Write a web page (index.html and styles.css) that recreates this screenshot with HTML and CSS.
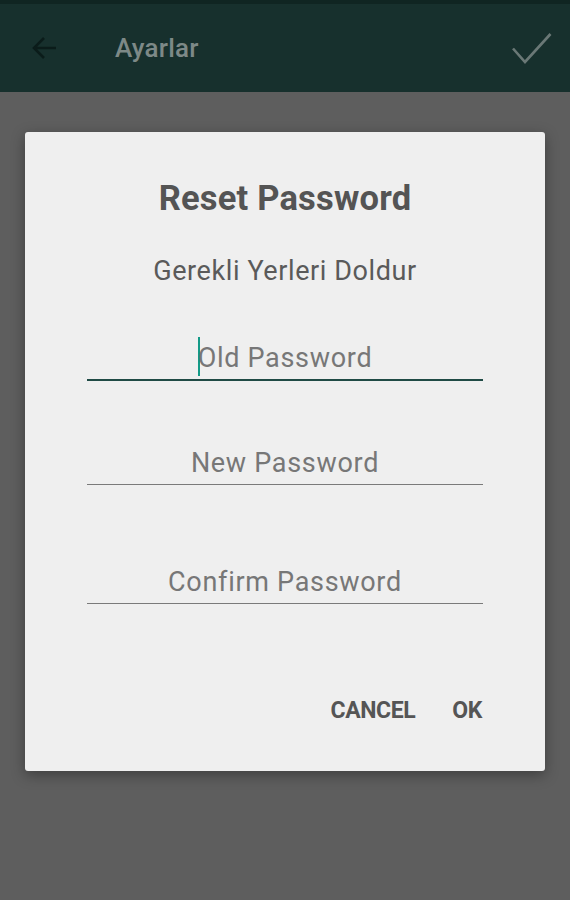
FILE: index.html
```html
<!DOCTYPE html>
<html>
<head>
<meta charset="utf-8">
<link rel="stylesheet" href="styles.css">
</head>
<body>
<div class="screen">
  <header class="appbar">
    <div class="statusbar"></div>
    <div class="toolbar">
      <svg class="icon-back" width="30" height="30" viewBox="0 0 30 30">
        <path d="M26 15H5M14 5L4 15l10 10" fill="none" stroke="#0b1c1a" stroke-width="2.6"/>
      </svg>
      <span class="title">Ayarlar</span>
      <svg class="icon-check" width="40" height="32" viewBox="0 0 40 32">
        <path d="M1 15.5l12 13.5L38.5 1" fill="none" stroke="#6a7876" stroke-width="2.6"/>
      </svg>
    </div>
  </header>
  <main class="overlay">
    <section class="dialog">
      <h1 class="dialog-title">Reset Password</h1>
      <p class="dialog-sub">Gerekli Yerleri Doldur</p>
      <div class="field field-active">
        <span class="cursor"></span><span class="ph">Old Password</span>
      </div>
      <div class="field field-2"><span class="ph">New Password</span></div>
      <div class="field field-3"><span class="ph">Confirm Password</span></div>
      <div class="actions">
        <span class="btn">CANCEL</span>
        <span class="btn">OK</span>
      </div>
    </section>
  </main>
</div>
</body>
</html>
```
FILE: styles.css
```css
* { box-sizing: border-box; margin: 0; padding: 0; }
html, body { width: 570px; height: 900px; overflow: hidden; }
body { font-family: Roboto, "Noto Sans", sans-serif; background: #5e5e5e; }
.screen { display: flex; flex-direction: column; height: 900px; }
.appbar { background: #17302d; height: 92px; display: flex; flex-direction: column; }
.statusbar { height: 4px; background: #102522; }
.toolbar { flex: 1; display: flex; align-items: center; padding: 0 18px 0 30px; }
.title { margin-left: 55px; font-size: 26px; font-weight: 500; color: #7d8987; flex: 1; letter-spacing: 0.2px; }
.icon-check { margin-top: 2px; }
.overlay { flex: 1; background: #5e5e5e; padding: 40px 25px 0; }
.dialog { background: #efefef; height: 639px; border-radius: 3px; box-shadow: 0 4px 14px rgba(0,0,0,0.35); display: flex; flex-direction: column; align-items: center; padding: 46px 62px 0; }
.dialog-title { font-size: 34.5px; font-weight: 700; color: #545454; line-height: 40px; letter-spacing: 0.2px; }
.dialog-sub { margin-top: 37px; font-size: 27px; color: #5a5a5a; line-height: 32px; letter-spacing: 0.6px; }
.field { align-self: stretch; border-bottom: 1px solid #7a7a7a; display: flex; justify-content: center; align-items: center; height: 50px; padding-top: 6px; font-size: 27px; color: #777; letter-spacing: 0.7px; }
.field-active { margin-top: 44px; border-bottom: 2px solid #1f4a45; }
.field-2 { margin-top: 54px; }
.field-3 { margin-top: 69px; }
.ph { line-height: 32px; }
.cursor { width: 2px; height: 39px; background: #139a87; margin-right: -2px; margin-top: -4px; }
.actions { align-self: stretch; margin-top: 94px; display: flex; justify-content: flex-end; gap: 37px; margin-right: 1px; }
.btn { font-size: 23px; font-weight: 700; color: #555; line-height: 26px; letter-spacing: -0.4px; }
```
